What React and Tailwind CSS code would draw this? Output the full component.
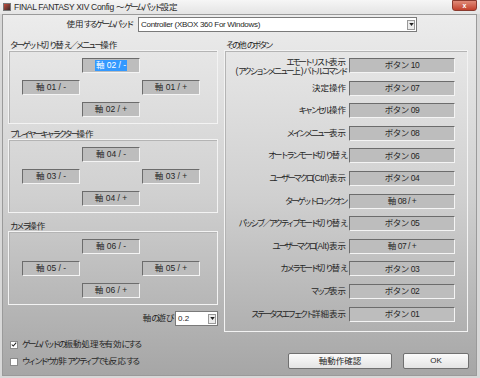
import React from 'react'

// MS UI Gothic style: kanji full width, kana and latin narrow
const kindOf = (c) => {
  if (/[\u3400-\u9fff々]/.test(c)) return 'k'
  if (/[\u3040-\u30ff\uff00-\uffef]/.test(c)) return 'n'
  return 'l'
}
const trackClass = { k: 'tracking-[0px]', n: 'tracking-[-2.4px]', l: 'tracking-[-0.3px]' }

const T = ({ children }) => {
  const runs = []
  for (const c of children) {
    const k = kindOf(c)
    if (runs.length && runs[runs.length - 1].k === k) runs[runs.length - 1].s += c
    else runs.push({ k, s: c })
  }
  return (
    <>
      {runs.map((r, i) => (
        <span key={i} className={trackClass[r.k]}>{r.s}</span>
      ))}
    </>
  )
}

const Field = ({ children, className = '' }) => (
  <div
    className={`flex items-center justify-center h-[15px] bg-[#bdbdbd] border border-t-[#6c6c6c] border-l-[#6c6c6c] border-r-[#f4f4f4] border-b-[#f4f4f4] text-[#262626] text-[8.5px] leading-none whitespace-pre ${className}`}
  >
    {children}
  </div>
)

const GroupLabel = ({ children, h }) => (
  <div className={`flex items-end pl-[2px] pb-[1px] text-[8.5px] leading-none text-[#262626] whitespace-nowrap ${h}`}>
    <T>{children}</T>
  </div>
)

const Cross = ({ up, left, right, down, sel }) => (
  <div className="h-[74px] border border-[#f3f3f3] shadow-[inset_1px_1px_0_#b4b4b4] pt-[7px] pl-[13px]">
    <div className="grid grid-cols-[58px_58px_58px] gap-x-[2px] gap-y-[7px]">
      <div />
      <Field>
        {sel ? <span className="bg-[#3399ff] text-white px-[1px] py-[1px]">{up}</span> : up}
      </Field>
      <div />
      <Field>{left}</Field>
      <div />
      <Field>{right}</Field>
      <div />
      <Field>{down}</Field>
      <div />
    </div>
  </div>
)

const Check = ({ checked, label }) => (
  <div className="flex items-center gap-[4px] h-[17px] pl-[2px]">
    <div className="w-[8px] h-[8px] bg-white border border-[#8a8a8a] flex items-center justify-center">
      {checked && (
        <svg viewBox="0 0 8 8" className="w-[7px] h-[7px]">
          <path d="M1 4 L3 6 L7 1.5" stroke="#222" strokeWidth="1.4" fill="none" />
        </svg>
      )}
    </div>
    <span className="text-[8.5px] leading-none text-[#262626] whitespace-nowrap">
      <T>{label}</T>
    </span>
  </div>
)

const rows = [
  ['エモートリスト表示', 'ボタン 10', '(アクションメニュー上)バトルコマンド'],
  ['決定操作', 'ボタン 07'],
  ['キャンセル操作', 'ボタン 09'],
  ['メインメニュー表示', 'ボタン 08'],
  ['オートランモード切り替え', 'ボタン 06'],
  ['ユーザーマクロ(Ctrl)表示', 'ボタン 04'],
  ['ターゲットロックオン', '軸 08 / +'],
  ['パッシブ／アクティブモード切り替え', 'ボタン 05'],
  ['ユーザーマクロ(Alt)表示', '軸 07 / +'],
  ['カメラモード切り替え', 'ボタン 03'],
  ['マップ表示', 'ボタン 02'],
  ['ステータスエフェクト詳細表示', 'ボタン 01'],
]

const Arrow = () => (
  <div className="ml-auto mr-[1px] w-[8px] h-[10px] bg-[#ececec] border border-[#999] flex items-center justify-center">
    <svg viewBox="0 0 6 4" className="w-[5px] h-[3px]"><path d="M0 0 H6 L3 4 Z" fill="#222" /></svg>
  </div>
)

export default function App() {
  return (
    <div className="w-[480px] h-[378px] overflow-hidden flex flex-col bg-[#d8d8d8] font-['Liberation_Sans','Noto_Sans_CJK_JP',sans-serif]">
      {/* title bar */}
      <div className="h-[14px] flex items-center bg-linear-to-b from-[#f6f6f6] to-[#e4e4e4] pl-[3px]">
        <div className="w-[8px] h-[8px] bg-linear-to-br from-[#c94a3a] to-[#3a2a2a] border border-[#777]" />
        <span className="ml-[3px] text-[8.5px] leading-none text-[#2a2a2a] whitespace-nowrap">
          <T>FINAL FANTASY XIV Config ～ ゲームパッド設定</T>
        </span>
        <div className="ml-auto mr-[3px] self-start w-[25px] h-[11px] rounded-b-[3px] bg-linear-to-b from-[#e08a78] to-[#c2402c] border border-[#8a3a2e] flex items-center justify-center">
          <span className="text-white text-[7px] leading-none font-bold">x</span>
        </div>
      </div>

      {/* body */}
      <div className="flex-1 ml-[2px] mr-[3px] mb-[2px] border border-[#9a9a9a] bg-linear-to-b from-[#ececec] via-[#d0d0d0] to-[#a6a6a6] pl-[5px]">
        <div className="flex items-center mt-[2px] h-[15px]">
          <div className="w-[124px] text-right text-[8.5px] leading-none text-[#262626] whitespace-nowrap">
            <T>使用するゲームパッド</T>
          </div>
          <div className="ml-[6px] w-[279px] h-[15px] bg-white border border-[#7a7a7a] flex items-center pl-[2px]">
            <span className="text-[8px] leading-none text-[#262626] tracking-[-0.3px]">Controller (XBOX 360 For Windows)</span>
            <Arrow />
          </div>
        </div>

        <div className="flex gap-[6px]">
          {/* left column */}
          <div className="w-[210px] flex flex-col">
            <GroupLabel h="h-[18px]">ターゲット切り替え／メニュー操作</GroupLabel>
            <Cross up="軸 02 / -" left="軸 01 / -" right="軸 01 / +" down="軸 02 / +" sel />
            <GroupLabel h="h-[15px]">プレイヤーキャラクター操作</GroupLabel>
            <Cross up="軸 04 / -" left="軸 03 / -" right="軸 03 / +" down="軸 04 / +" />
            <GroupLabel h="h-[18px]">カメラ操作</GroupLabel>
            <Cross up="軸 06 / -" left="軸 05 / -" right="軸 05 / +" down="軸 06 / +" />
            <div className="flex items-center justify-end mt-[6px] h-[15px] gap-[3px]">
              <span className="text-[8.5px] leading-none text-[#262626]"><T>軸の遊び</T></span>
              <div className="w-[43px] h-[15px] bg-white border border-[#7a7a7a] flex items-center pl-[2px]">
                <span className="text-[8px] leading-none text-[#262626]">0.2</span>
                <Arrow />
              </div>
            </div>
            <div className="mt-[10px]">
              <Check checked label="ゲームパッドの振動処理を有効にする" />
              <Check label="ウィンドウが非アクティブでも反応する" />
            </div>
          </div>

          {/* right column */}
          <div className="w-[244px] flex flex-col">
            <GroupLabel h="h-[18px]">その他のボタン</GroupLabel>
            <div className="h-[282px] border border-[#f3f3f3] shadow-[inset_1px_1px_0_#b4b4b4] pt-[7px] flex flex-col gap-[7.6px]">
              {rows.map(([label, value, sub]) => (
                <div key={label} className="flex items-center h-[15px]">
                  <div className="w-[124px] pr-[3px] text-right text-[8.5px] leading-[9px] text-[#262626] whitespace-nowrap">
                    {sub ? (
                      <>
                        <div className="mt-[3px]"><T>{label}</T></div>
                        <div><T>{sub}</T></div>
                      </>
                    ) : (
                      <T>{label}</T>
                    )}
                  </div>
                  <Field className="w-[106px] tracking-[-0.5px]">{value}</Field>
                </div>
              ))}
            </div>
            <div className="flex justify-end gap-[11px] mt-[21px] mr-[-1px]">
              <button className="w-[104px] h-[16px] rounded-[2px] border border-[#707070] bg-linear-to-b from-[#fbfbfb] to-[#e4e4e4] text-[8.5px] leading-none text-[#262626]">
                軸動作確認
              </button>
              <button className="w-[66px] h-[16px] rounded-[2px] border border-[#707070] bg-linear-to-b from-[#fbfbfb] to-[#e4e4e4] text-[8px] leading-none text-[#262626]">
                OK
              </button>
            </div>
          </div>
        </div>
      </div>
    </div>
  )
}
